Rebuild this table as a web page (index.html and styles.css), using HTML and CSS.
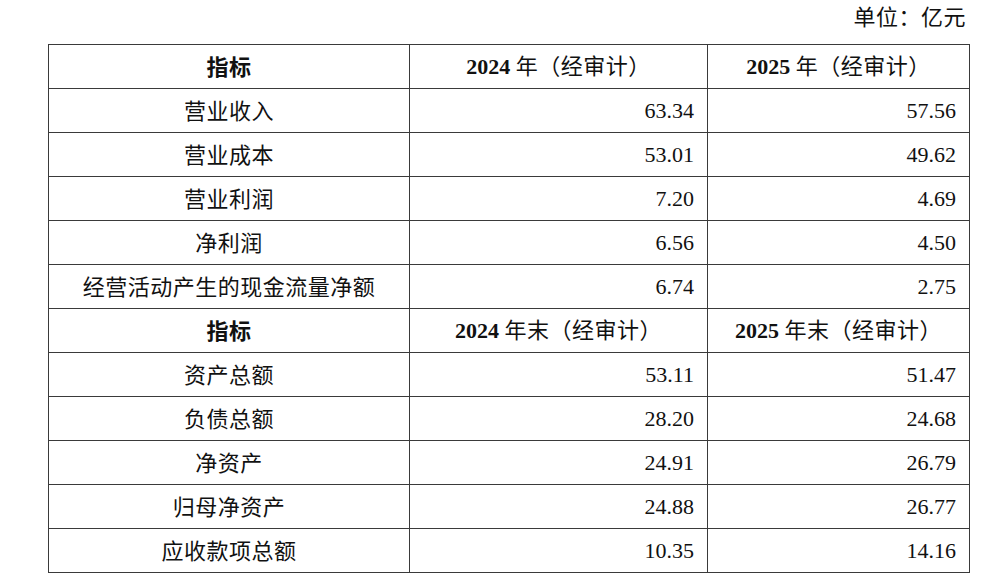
FILE: index.html
```html
<!DOCTYPE html>
<html lang="zh-CN">
<head>
<meta charset="utf-8">
<link rel="stylesheet" href="styles.css">
</head>
<body>
<div class="page">
  <div class="unit">单位：亿元</div>
  <table class="fin">
    <colgroup><col class="c1"><col class="c2"><col class="c3"></colgroup>
    <tr class="head">
      <td class="label strong">指标</td>
      <td class="hd"><span class="yr">2024</span> 年（经审计）</td>
      <td class="hd"><span class="yr">2025</span> 年（经审计）</td>
    </tr>
    <tr><td class="label">营业收入</td><td class="num">63.34</td><td class="num">57.56</td></tr>
    <tr><td class="label">营业成本</td><td class="num">53.01</td><td class="num">49.62</td></tr>
    <tr><td class="label">营业利润</td><td class="num">7.20</td><td class="num">4.69</td></tr>
    <tr><td class="label">净利润</td><td class="num">6.56</td><td class="num">4.50</td></tr>
    <tr><td class="label">经营活动产生的现金流量净额</td><td class="num">6.74</td><td class="num">2.75</td></tr>
    <tr class="head">
      <td class="label strong">指标</td>
      <td class="hd"><span class="yr">2024</span> 年末（经审计）</td>
      <td class="hd"><span class="yr">2025</span> 年末（经审计）</td>
    </tr>
    <tr><td class="label">资产总额</td><td class="num">53.11</td><td class="num">51.47</td></tr>
    <tr><td class="label">负债总额</td><td class="num">28.20</td><td class="num">24.68</td></tr>
    <tr><td class="label">净资产</td><td class="num">24.91</td><td class="num">26.79</td></tr>
    <tr><td class="label">归母净资产</td><td class="num">24.88</td><td class="num">26.77</td></tr>
    <tr><td class="label">应收款项总额</td><td class="num">10.35</td><td class="num">14.16</td></tr>
  </table>
</div>
</body>
</html>
```

FILE: styles.css
```css
html, body {
  margin: 0;
  padding: 0;
  background: #fff;
}
body {
  color: #111;
  font-family: "Noto Sans CJK SC", "Liberation Sans", sans-serif;
  font-size: 22px;
}
.page {
  width: 921px;
  margin-left: 48px;
}
.unit {
  height: 44px;
  line-height: 30px;
  text-align: right;
  padding-right: 3px;
  box-sizing: border-box;
  letter-spacing: 0.5px;
}
.fin {
  width: 921px;
  border-collapse: collapse;
  table-layout: fixed;
}
.c1 { width: 361px; }
.c2 { width: 298px; }
.c3 { width: 262px; }
.fin td {
  border: 1px solid #3a3a3a;
  height: 43px;
  padding: 0;
  vertical-align: middle;
  line-height: 1;
}
.fin td.label,
.fin td.hd {
  height: 40px;
  padding-bottom: 3px;
  text-align: center;
  font-family: "Noto Sans CJK SC", sans-serif;
  letter-spacing: 0.5px;
}
.strong {
  font-weight: 600;
}
.yr {
  font-family: "Liberation Serif", serif;
  font-weight: 700;
  letter-spacing: 0;
}
.fin td.num {
  text-align: right;
  padding-right: 13px;
  font-family: "Liberation Serif", serif;
}
```
